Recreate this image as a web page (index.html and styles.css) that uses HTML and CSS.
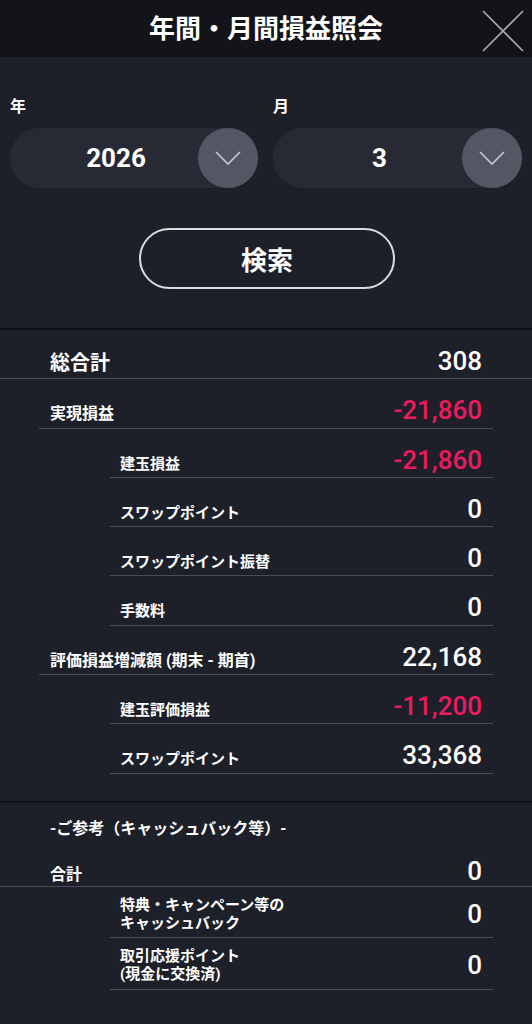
FILE: index.html
```html
<!DOCTYPE html>
<html lang="ja">
<head>
    <meta charset="UTF-8">
    <meta name="viewport" content="width=device-width, initial-scale=1.0">
    <title>年間・月間損益照会</title>
    <link rel="stylesheet" href="styles.css">
</head>
<body>
    <header class="header">
        <span></span>
        <h1>年間・月間損益照会</h1>
        <button class="close-btn" aria-label="閉じる">
            <svg width="42" height="42" viewBox="0 0 42 42">
                <path d="M1 1 L41 41 M41 1 L1 41" stroke="#a9aab0" stroke-width="1.6" fill="none"/>
            </svg>
        </button>
    </header>

    <div class="picker">
        <div class="picker-field">
            <label>年</label>
            <div class="select">
                <span class="select-value">2026</span>
                <span class="select-arrow">
                    <svg width="26" height="14" viewBox="0 0 26 14">
                        <path d="M1 1 L13 13 L25 1" stroke="#c9cad0" stroke-width="1.6" fill="none"/>
                    </svg>
                </span>
            </div>
        </div>
        <div class="picker-field">
            <label>月</label>
            <div class="select">
                <span class="select-value">3</span>
                <span class="select-arrow">
                    <svg width="26" height="14" viewBox="0 0 26 14">
                        <path d="M1 1 L13 13 L25 1" stroke="#c9cad0" stroke-width="1.6" fill="none"/>
                    </svg>
                </span>
            </div>
        </div>
    </div>

    <div class="search-wrap">
        <button class="search-btn">検索</button>
    </div>

    <section class="result">
        <div class="row row-total">
            <span class="label">総合計</span>
            <span class="value">308</span>
        </div>
        <div class="row row-main">
            <span class="label">実現損益</span>
            <span class="value minus">-21,860</span>
        </div>
        <div class="row row-sub">
            <span class="label">建玉損益</span>
            <span class="value minus">-21,860</span>
        </div>
        <div class="row row-sub">
            <span class="label">スワップポイント</span>
            <span class="value">0</span>
        </div>
        <div class="row row-sub">
            <span class="label">スワップポイント振替</span>
            <span class="value">0</span>
        </div>
        <div class="row row-sub">
            <span class="label">手数料</span>
            <span class="value">0</span>
        </div>
        <div class="row row-main">
            <span class="label">評価損益増減額 (期末 - 期首)</span>
            <span class="value">22,168</span>
        </div>
        <div class="row row-sub">
            <span class="label">建玉評価損益</span>
            <span class="value minus">-11,200</span>
        </div>
        <div class="row row-sub">
            <span class="label">スワップポイント</span>
            <span class="value">33,368</span>
        </div>
    </section>

    <section class="result reference">
        <p class="reference-title">-ご参考（キャッシュバック等）-</p>
        <div class="row row-total row-cb-total">
            <span class="label">合計</span>
            <span class="value">0</span>
        </div>
        <div class="row row-sub row-two">
            <span class="label">特典・キャンペーン等の<br>キャッシュバック</span>
            <span class="value">0</span>
        </div>
        <div class="row row-sub row-two">
            <span class="label">取引応援ポイント<br>(現金に交換済)</span>
            <span class="value">0</span>
        </div>
    </section>
</body>
</html>
```

FILE: styles.css
```css
:root {
    --bg-color: #1e2029;
    --header-color: #131419;
    --pill-color: #272a35;
    --circle-color: #545663;
    --line-color: #4a4c57;
    --divider-color: #111216;
    --minus-color: #eb1a5e;
}

* {
    box-sizing: border-box;
    margin: 0;
    padding: 0;
}

body {
    font-family: Roboto, "Noto Sans CJK JP", sans-serif;
    background-color: var(--bg-color);
    color: #fff;
    width: 532px;
    min-height: 1024px;
}

button {
    font-family: inherit;
    color: inherit;
    background: none;
    border: none;
}

.header {
    height: 57px;
    background-color: var(--header-color);
    display: grid;
    grid-template-columns: 1fr auto 1fr;
    align-items: center;
}

.header h1 {
    font-size: 26px;
    font-weight: 700;
    line-height: 1;
}

.close-btn {
    justify-self: end;
    width: 42px;
    height: 42px;
    margin-right: 8px;
    margin-top: 5px;
    display: flex;
}

.picker {
    display: grid;
    grid-template-columns: 248px 249px;
    gap: 15px;
    padding: 0 10px;
    margin-top: 39px;
}

.picker-field label {
    display: block;
    font-size: 16px;
    font-weight: 700;
    line-height: 22px;
    margin-bottom: 10px;
}

.select {
    height: 60px;
    border-radius: 30px;
    background-color: var(--pill-color);
    display: flex;
    align-items: center;
}

.select-value {
    flex: 1;
    text-align: center;
    padding-left: 24px;
    font-size: 26px;
    font-weight: 700;
}

.select-arrow {
    width: 60px;
    height: 60px;
    border-radius: 50%;
    background-color: var(--circle-color);
    display: flex;
    align-items: center;
    justify-content: center;
}

.search-wrap {
    display: flex;
    justify-content: center;
    padding: 40px 0 39px;
    border-bottom: 2px solid var(--divider-color);
}

.search-btn {
    width: 256px;
    height: 61px;
    border: 2px solid #dcdcdc;
    border-radius: 31px;
    font-size: 26px;
    font-weight: 700;
    margin-left: 2px;
}

.row {
    display: flex;
    justify-content: space-between;
    align-items: baseline;
    height: 49.3px;
    padding-bottom: 2px;
    border-bottom: 1px solid var(--line-color);
}

.label {
    font-size: 15px;
    font-weight: 700;
    line-height: 22px;
}

.value {
    font-size: 26px;
    font-weight: 500;
    line-height: 30px;
    padding-top: 16px;
}

.minus {
    color: var(--minus-color);
}

.row-total {
    padding-left: 50px;
    padding-right: 50px;
}

.row-total .label {
    font-size: 20px;
}

.row-main {
    margin: 0 39px;
    padding-left: 11px;
    padding-right: 11px;
}

.row-main .label {
    font-size: 16px;
}

.row-sub {
    margin-left: 110px;
    margin-right: 39px;
    padding-left: 10px;
    padding-right: 11px;
}

.result {
    padding-bottom: 27px;
    border-bottom: 2px solid var(--divider-color);
}

.reference {
    border-bottom: none;
}

.reference-title {
    font-size: 16px;
    font-weight: 700;
    line-height: 22px;
    padding: 15px 0 0 50px;
}

.row-cb-total {
    height: 47px;
}

.row-cb-total .label {
    font-size: 16px;
}

.row-two {
    height: 51.5px;
    align-items: center;
    padding-bottom: 0;
    padding-top: 4px;
}

.row-two .label {
    line-height: 18px;
}

.row-two .value {
    padding-top: 0;
}
```
